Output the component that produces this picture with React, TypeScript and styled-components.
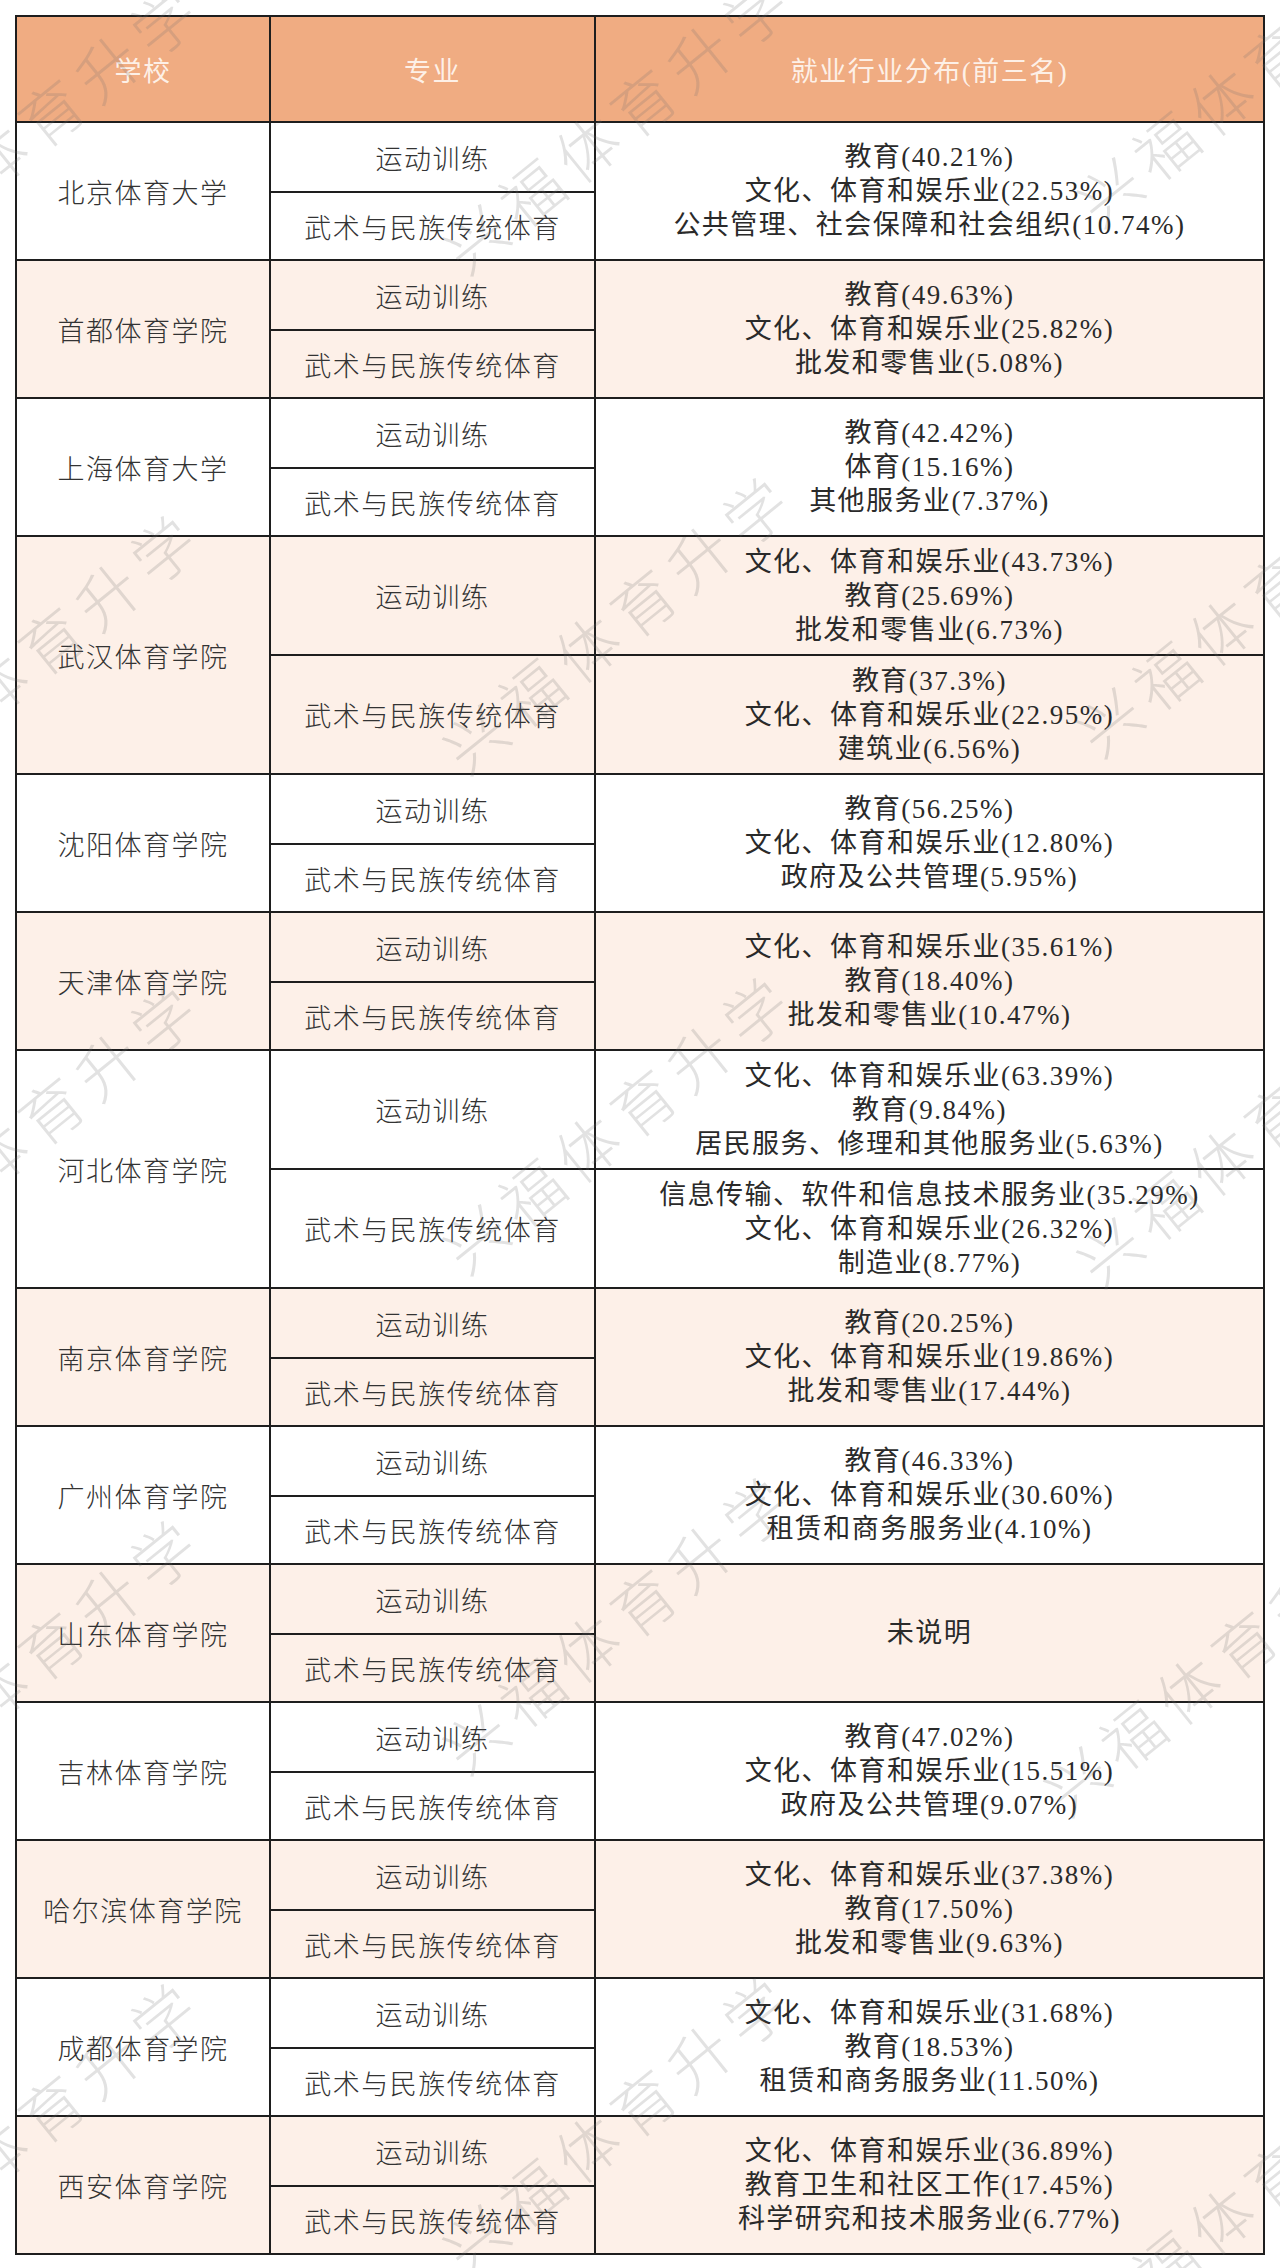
import * as React from 'react';
import styled, { createGlobalStyle } from 'styled-components';

const GlobalStyle = createGlobalStyle`
  html, body {
    margin: 0;
    padding: 0;
    background: #ffffff;
  }
  body {
    font-family: "Noto Sans CJK SC", "Noto Sans", sans-serif;
  }
`;

interface School {
  name: string;
  tall?: boolean;
  industries: string[][];
}

const majors = ['运动训练', '武术与民族传统体育'];

const schools: School[] = [
  { name: '北京体育大学', industries: [['教育(40.21%)', '文化、体育和娱乐业(22.53%)', '公共管理、社会保障和社会组织(10.74%)']] },
  { name: '首都体育学院', industries: [['教育(49.63%)', '文化、体育和娱乐业(25.82%)', '批发和零售业(5.08%)']] },
  { name: '上海体育大学', industries: [['教育(42.42%)', '体育(15.16%)', '其他服务业(7.37%)']] },
  {
    name: '武汉体育学院',
    tall: true,
    industries: [
      ['文化、体育和娱乐业(43.73%)', '教育(25.69%)', '批发和零售业(6.73%)'],
      ['教育(37.3%)', '文化、体育和娱乐业(22.95%)', '建筑业(6.56%)'],
    ],
  },
  { name: '沈阳体育学院', industries: [['教育(56.25%)', '文化、体育和娱乐业(12.80%)', '政府及公共管理(5.95%)']] },
  { name: '天津体育学院', industries: [['文化、体育和娱乐业(35.61%)', '教育(18.40%)', '批发和零售业(10.47%)']] },
  {
    name: '河北体育学院',
    tall: true,
    industries: [
      ['文化、体育和娱乐业(63.39%)', '教育(9.84%)', '居民服务、修理和其他服务业(5.63%)'],
      ['信息传输、软件和信息技术服务业(35.29%)', '文化、体育和娱乐业(26.32%)', '制造业(8.77%)'],
    ],
  },
  { name: '南京体育学院', industries: [['教育(20.25%)', '文化、体育和娱乐业(19.86%)', '批发和零售业(17.44%)']] },
  { name: '广州体育学院', industries: [['教育(46.33%)', '文化、体育和娱乐业(30.60%)', '租赁和商务服务业(4.10%)']] },
  { name: '山东体育学院', industries: [['未说明']] },
  { name: '吉林体育学院', industries: [['教育(47.02%)', '文化、体育和娱乐业(15.51%)', '政府及公共管理(9.07%)']] },
  { name: '哈尔滨体育学院', industries: [['文化、体育和娱乐业(37.38%)', '教育(17.50%)', '批发和零售业(9.63%)']] },
  { name: '成都体育学院', industries: [['文化、体育和娱乐业(31.68%)', '教育(18.53%)', '租赁和商务服务业(11.50%)']] },
  { name: '西安体育学院', industries: [['文化、体育和娱乐业(36.89%)', '教育卫生和社区工作(17.45%)', '科学研究和技术服务业(6.77%)']] },
];

// bottom-left anchor of each watermark string
const marks: Array<[number, number]> = [
  [-123, 290], [-123, 818], [-123, 1288], [-123, 1823], [-123, 2286],
  [469, 280], [469, 780], [469, 1280], [469, 1780], [469, 2280],
  [1103, 233], [1103, 763], [1103, 1293], [1070, 1822], [1103, 2352],
];

const Page = styled.div`
  position: relative;
  width: 1280px;
  height: 2268px;
  overflow: hidden;
  background: #fff;
  padding: 15px 15px 0 15px;
  box-sizing: border-box;
`;

const Grid = styled.div<{ $rows: string }>`
  display: grid;
  grid-template-columns: 252px 323px 1fr;
  grid-template-rows: ${p => p.$rows};
  gap: 2px;
  padding: 2px;
  width: 1250px;
  box-sizing: border-box;
  background: #1e1e1e;
`;

const HeadCell = styled.div`
  display: flex;
  align-items: center;
  justify-content: center;
  background: #f0ac82;
  color: rgba(255, 248, 242, 0.92);
  font-family: "Liberation Serif", "Noto Sans CJK SC", serif;
  font-size: 27px;
  letter-spacing: 1.5px;
`;

const Cell = styled.div<{ $tint: boolean; $span?: number }>`
  display: flex;
  align-items: center;
  justify-content: center;
  background: ${p => (p.$tint ? '#fdf0e8' : '#ffffff')};
  grid-row: span ${p => p.$span || 1};
  color: #333;
  font-size: 27px;
  letter-spacing: 1.5px;
  text-align: center;
`;

const NameCell = styled(Cell)`
  font-family: "Noto Sans CJK SC", sans-serif;
  font-weight: 300;
`;

const MajorCell = styled(Cell)`
  font-family: "Noto Sans CJK SC", sans-serif;
  font-weight: 300;
`;

const IndustryCell = styled(Cell)`
  flex-direction: column;
  font-family: "Liberation Serif", "Noto Sans CJK SC", serif;
  font-size: 27px;
  line-height: 34px;
  letter-spacing: 1.5px;
  color: #2a2a2a;
`;

const Line = styled.div`
  white-space: nowrap;
`;

const WatermarkLayer = styled.div`
  position: absolute;
  inset: 0;
  pointer-events: none;
`;

const Mark = styled.div.attrs<{ $x: number; $y: number }>(p => ({
  style: { left: `${p.$x}px`, top: `${p.$y - 62}px` },
}))<{ $x: number; $y: number }>`
  position: absolute;
  font-family: "Noto Sans CJK SC", sans-serif;
  font-weight: 300;
  font-size: 62px;
  line-height: 62px;
  letter-spacing: 10px;
  white-space: nowrap;
  color: rgba(110, 110, 110, 0.2);
  transform: rotate(-39deg);
  transform-origin: 0 100%;
`;

export default function App() {
  const rows = ['104px'];
  schools.forEach(s => {
    if (s.tall) rows.push('117px', '117px');
    else rows.push('68px', '66px');
  });

  return (
    <Page>
      <GlobalStyle />
      <Grid $rows={rows.join(' ')}>
        <HeadCell>学校</HeadCell>
        <HeadCell>专业</HeadCell>
        <HeadCell>就业行业分布(前三名)</HeadCell>
        {schools.map((s, i) => {
          const tint = i % 2 === 1;
          return (
            <React.Fragment key={s.name}>
              <NameCell $tint={tint} $span={2}>{s.name}</NameCell>
              <MajorCell $tint={tint}>{majors[0]}</MajorCell>
              <IndustryCell $tint={tint} $span={s.tall ? 1 : 2}>
                {s.industries[0].map(t => <Line key={t}>{t}</Line>)}
              </IndustryCell>
              <MajorCell $tint={tint}>{majors[1]}</MajorCell>
              {s.tall && (
                <IndustryCell $tint={tint}>
                  {s.industries[1].map(t => <Line key={t}>{t}</Line>)}
                </IndustryCell>
              )}
            </React.Fragment>
          );
        })}
      </Grid>
      <WatermarkLayer>
        {marks.map(([x, y]) => (
          <Mark key={`${x}-${y}`} $x={x} $y={y}>兴福体育升学</Mark>
        ))}
      </WatermarkLayer>
    </Page>
  );
}
